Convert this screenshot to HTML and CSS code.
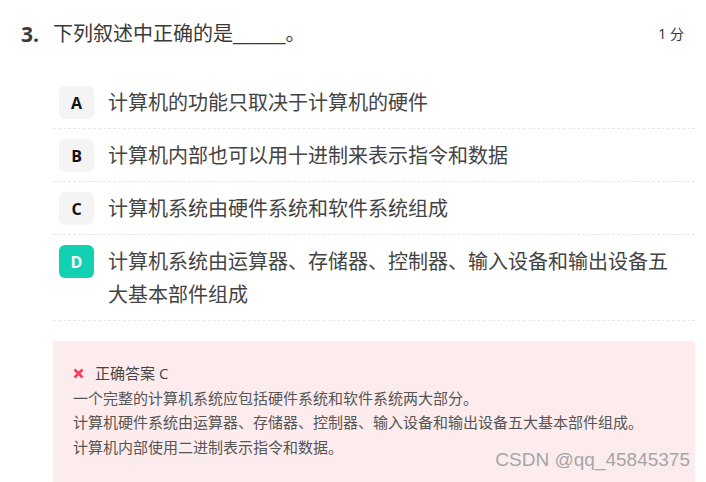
FILE: index.html
```html
<!DOCTYPE html>
<html lang="zh-CN">
<head>
<meta charset="utf-8">
<title>Question 3</title>
<link rel="stylesheet" href="styles.css">
</head>
<body>
<div class="quiz">
  <div class="q-head">
    <span class="q-num">3.</span>
    <span class="q-title">下列叙述中正确的是<span class="blank">______</span>。</span>
    <span class="q-score">1 分</span>
  </div>
  <ul class="options">
    <li class="option"><span class="badge">A</span><span class="opt-text">计算机的功能只取决于计算机的硬件</span></li>
    <li class="option"><span class="badge">B</span><span class="opt-text">计算机内部也可以用十进制来表示指令和数据</span></li>
    <li class="option"><span class="badge">C</span><span class="opt-text">计算机系统由硬件系统和软件系统组成</span></li>
    <li class="option"><span class="badge badge-selected">D</span><span class="opt-text">计算机系统由运算器、存储器、控制器、输入设备和输出设备五大基本部件组成</span></li>
  </ul>
  <div class="feedback">
    <div class="fb-head">
      <svg class="fb-icon" width="11" height="11" viewBox="0 0 11 11"><path d="M1.5 1.5 L9.5 9.5 M9.5 1.5 L1.5 9.5" stroke="#f2405b" stroke-width="2.6" stroke-linecap="butt"/></svg>
      <span>正确答案 C</span>
    </div>
    <p class="fb-line">一个完整的计算机系统应包括硬件系统和软件系统两大部分。</p>
    <p class="fb-line">计算机硬件系统由运算器、存储器、控制器、输入设备和输出设备五大基本部件组成。</p>
    <p class="fb-line">计算机内部使用二进制表示指令和数据。</p>
  </div>
</div>
<div class="watermark">CSDN @qq_45845375</div>
</body>
</html>
```
FILE: styles.css
```css
html, body {
  margin: 0;
  padding: 0;
  background: #ffffff;
  overflow: hidden;
}
body {
  font-family: "Open Sans", "Noto Sans CJK SC", sans-serif;
  color: #333;
  position: relative;
  height: 482px;
}
.quiz {
  padding: 18px 22px 0 21px;
}
.q-head {
  display: flex;
  align-items: center;
  height: 32px;
}
.q-num {
  font-weight: 700;
  font-size: 21px;
  color: #3a3a3a;
  width: 32px;
  line-height: 32px;
}
.q-title {
  font-size: 20px;
  line-height: 32px;
  color: #3a3a3a;
  flex: 1;
}
.blank {
  font-family: "Open Sans", sans-serif;
}
.q-score {
  font-size: 14px;
  color: #333;
  line-height: 32px;
}
.options {
  list-style: none;
  margin: 26px -11px 0 32px;
  padding: 0;
}
.option {
  display: flex;
  align-items: flex-start;
  gap: 14px;
  padding: 10px 0 9px 6px;
  border-bottom: 1px dashed #e8e8e8;
}
.badge {
  flex: none;
  width: 35px;
  height: 33px;
  border-radius: 6px;
  background: #f4f4f4;
  color: #111;
  font-weight: 700;
  font-size: 16px;
  display: flex;
  align-items: center;
  justify-content: center;
}
.badge-selected {
  background: #12d0b2;
  color: #fff;
}
.opt-text {
  font-size: 20px;
  line-height: 33px;
  color: #444;
  padding-right: 20px;
}
.feedback {
  margin: 20px -11px 0 32px;
  background: #fdeced;
  padding: 20px 20px 40px 20px;
  font-size: 15px;
  line-height: 24.5px;
  color: #555;
}
.fb-head {
  display: flex;
  align-items: center;
  gap: 11px;
  color: #444;
}
.fb-icon {
  flex: none;
}
.fb-line {
  margin: 0;
}
.watermark {
  position: absolute;
  right: 16px;
  top: 449px;
  font-family: "Liberation Sans", Arial, sans-serif;
  font-size: 19px;
  line-height: 22px;
  color: #a6a6a6;
}
```
